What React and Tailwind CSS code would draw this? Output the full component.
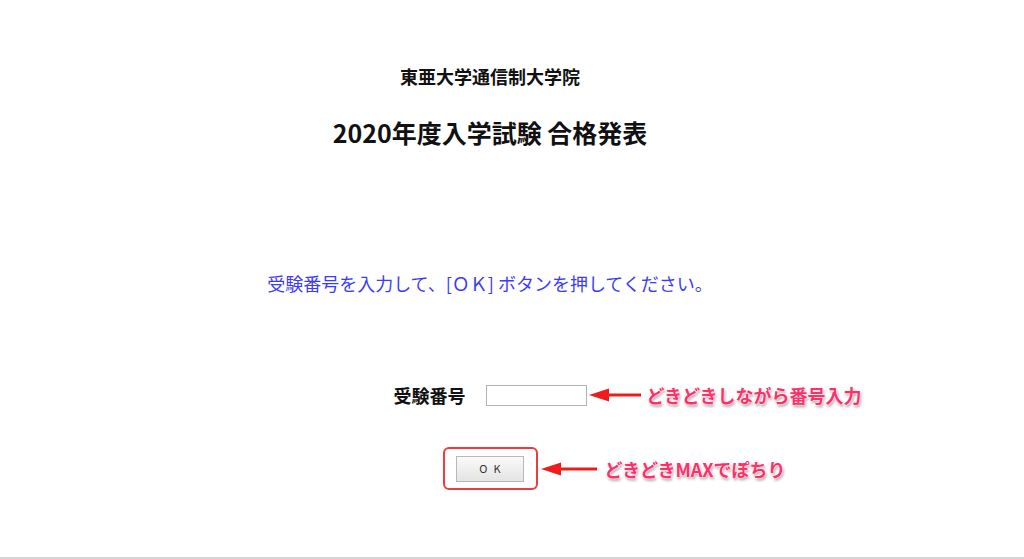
import React from "react";

function Arrow({ width }) {
  return (
    <svg width={width} height="16" viewBox={`0 0 ${width} 16`} className="block">
      <polygon points={`0,8 20,1.5 20,14.5`} fill="#ee1c1c" />
      <rect x="18" y="6.5" width={width - 18} height="3" fill="#ee1c1c" />
    </svg>
  );
}

const note =
  "font-bold text-[#ff2f6a] text-[18px] leading-none whitespace-nowrap [text-shadow:0_0_2px_#fff,0_0_2px_#fff,1px_2px_3px_rgba(0,0,0,0.45)]";

export default function App() {
  return (
    <div
      className="h-[559px] bg-white border-b-2 border-[#d4d4d4] overflow-hidden"
      style={{ fontFamily: '"Noto Sans CJK JP", "Noto Sans", sans-serif' }}
    >
      <div className="w-[980px] flex flex-col items-center text-[#111]">
        <h1 className="mt-[64px] text-[18px] font-bold leading-[24px]">東亜大学通信制大学院</h1>
        <h2 className="mt-[28px] text-[25px] font-bold leading-[32px]">2020年度入学試験 合格発表</h2>

        <p className="mt-[122px] text-[18px] leading-[26px] text-[#3b3bff]">
          受験番号を入力して、[ＯＫ] ボタンを押してください。
        </p>

        <div className="mt-[87px] h-[24px] flex items-center gap-[20px] relative">
          <span className="text-[18px] font-bold leading-[24px]">受験番号</span>
          <input
            type="text"
            className="w-[101px] h-[21px] border border-[#b4b4b4] bg-white outline-none"
          />
          <div className="absolute left-[calc(100%+2px)] top-1/2 -translate-y-1/2 flex items-center gap-[6px]">
            <Arrow width={52} />
            <span className={note}>どきどきしながら番号入力</span>
          </div>
        </div>

        <div className="mt-[40px] relative">
          <div className="w-[95px] h-[43px] border-2 border-[#f23a3a] rounded-[6px] flex items-center justify-center">
            <button className="w-[68px] h-[26px] border border-[#b8b8b8] bg-gradient-to-b from-[#fafafa] to-[#e4e4e4] text-[11px] tracking-[6px] pl-[6px] text-[#333]">
              OK
            </button>
          </div>
          <div className="absolute left-[calc(100%+3px)] top-1/2 -translate-y-1/2 flex items-center gap-[8px]">
            <Arrow width={56} />
            <span className={note}>どきどきMAXでぽちり</span>
          </div>
        </div>
      </div>
    </div>
  );
}
